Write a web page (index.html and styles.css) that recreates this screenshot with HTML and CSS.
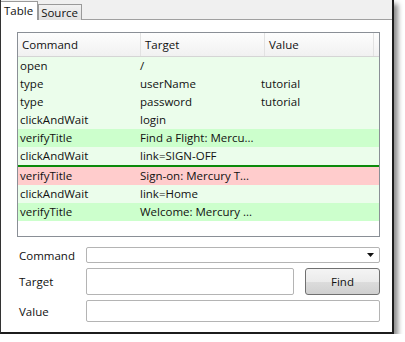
FILE: index.html
```html
<!DOCTYPE html>
<html>
<head>
    <title>Selenium IDE - Table</title>
    <meta charset="UTF-8">
    <link rel="stylesheet" href="styles.css">
</head>
<body>
    <div class="window">
        <div class="tabs">
            <div class="tab active">Table</div>
            <div class="tab">Source</div>
        </div>
        <div class="content">
            <div class="grid">
                <div class="row head">
                    <div class="cell c1">Command</div>
                    <div class="cell c2">Target</div>
                    <div class="cell c3">Value</div>
                </div>
                <div class="row">
                    <div class="cell c1">open</div>
                    <div class="cell c2">/</div>
                    <div class="cell c3"></div>
                </div>
                <div class="row">
                    <div class="cell c1">type</div>
                    <div class="cell c2">userName</div>
                    <div class="cell c3">tutorial</div>
                </div>
                <div class="row">
                    <div class="cell c1">type</div>
                    <div class="cell c2">password</div>
                    <div class="cell c3">tutorial</div>
                </div>
                <div class="row">
                    <div class="cell c1">clickAndWait</div>
                    <div class="cell c2">login</div>
                    <div class="cell c3"></div>
                </div>
                <div class="row passed">
                    <div class="cell c1">verifyTitle</div>
                    <div class="cell c2">Find a Flight: Mercu...</div>
                    <div class="cell c3"></div>
                </div>
                <div class="row current">
                    <div class="cell c1">clickAndWait</div>
                    <div class="cell c2">link=SIGN-OFF</div>
                    <div class="cell c3"></div>
                </div>
                <div class="row failed">
                    <div class="cell c1">verifyTitle</div>
                    <div class="cell c2">Sign-on: Mercury T...</div>
                    <div class="cell c3"></div>
                </div>
                <div class="row">
                    <div class="cell c1">clickAndWait</div>
                    <div class="cell c2">link=Home</div>
                    <div class="cell c3"></div>
                </div>
                <div class="row passed">
                    <div class="cell c1">verifyTitle</div>
                    <div class="cell c2">Welcome: Mercury ...</div>
                    <div class="cell c3"></div>
                </div>
            </div>
            <div class="form">
                <div class="form-row cmd-row">
                    <label>Command</label>
                    <div class="field select">
                        <svg viewBox="0 0 7 4" width="7" height="4"><path d="M0 0h7L3.5 4z"/></svg>
                    </div>
                </div>
                <div class="form-row target-row">
                    <label>Target</label>
                    <div class="field target"></div>
                    <button class="find">Find</button>
                </div>
                <div class="form-row value-row">
                    <label>Value</label>
                    <div class="field"></div>
                </div>
            </div>
        </div>
    </div>
</body>
</html>
```

FILE: styles.css
```css
body {
    margin: 0;
    background: #fff;
    font-family: "Open Sans", "Noto Sans", Arial, sans-serif;
    font-size: 11.5px;
    color: #111;
}
.window {
    width: 391px;
    height: 332px;
    border-left: 1px solid #333;
    border-right: 2px solid #1c1c1c;
    border-bottom: 2px solid #1c1c1c;
    background: #fff;
    box-shadow: 4px 4px 5px rgba(0, 0, 0, 0.45);
    display: flex;
    flex-direction: column;
}
.tabs {
    height: 19px;
    background: #f0f0f0;
    border-bottom: 1px solid #a0a0a0;
    display: flex;
    align-items: flex-end;
}
.tab {
    height: 15px;
    padding: 0 3px 0 2px;
    margin-bottom: -1px;
    line-height: 15px;
    border: 1px solid #9a9a9a;
    border-bottom: none;
    background: linear-gradient(#f2f2f2, #e0e0e0);
}
.tab.active {
    height: 18px;
    line-height: 18px;
    background: #fff;
    padding: 0 4px 0 3px;
    border-left: none;
}
.content {
    padding: 12px 12px 0 16px;
}
.grid {
    height: 203px;
    border: 1px solid #8a8f96;
    display: flex;
    flex-direction: column;
}
.row {
    display: flex;
    height: 18px;
    line-height: 18px;
    background: #ebfdeb;
}
.row.head {
    height: 23px;
    line-height: 23px;
    background: linear-gradient(#fdfdfd, #f1f1f1);
    border-bottom: 1px solid #d5d5d5;
}
.row.passed {
    background: #ccffcc;
}
.row.current {
    border-bottom: 2px solid #0a8a0a;
}
.row.failed {
    background: #ffcccc;
}
.cell {
    padding-left: 2px;
    white-space: nowrap;
    overflow: hidden;
}
.c1 {
    width: 118px;
}
.c2 {
    width: 119px;
}
.c3 {
    flex: 1;
}
.head .cell {
    padding-left: 4px;
    border-right: 1px solid #e2e2e2;
}
.head .c3 {
    margin-right: 5px;
}
.form {
    margin-top: 10px;
    display: flex;
    flex-direction: column;
    gap: 5px;
}
.form-row {
    display: flex;
    align-items: center;
}
.form-row label {
    width: 67px;
    padding-left: 2px;
}
.field {
    flex: 1;
    border: 1px solid #b4b4b4;
    border-radius: 2px;
    background: #fff;
    height: 20px;
}
.cmd-row .field {
    height: 14px;
    display: flex;
    align-items: center;
    justify-content: flex-end;
    padding-right: 5px;
}
.select svg {
    fill: #111;
}
.target-row .field {
    flex: none;
    width: 206px;
    height: 25px;
}
.find {
    margin-left: 11px;
    width: 75px;
    height: 27px;
    border: 1px solid #707070;
    border-radius: 3px;
    background: linear-gradient(#f4f4f4 0%, #ebebeb 50%, #dcdcdc 51%, #d0d0d0 100%);
    font-family: inherit;
    font-size: 11.5px;
    color: #111;
}
```
